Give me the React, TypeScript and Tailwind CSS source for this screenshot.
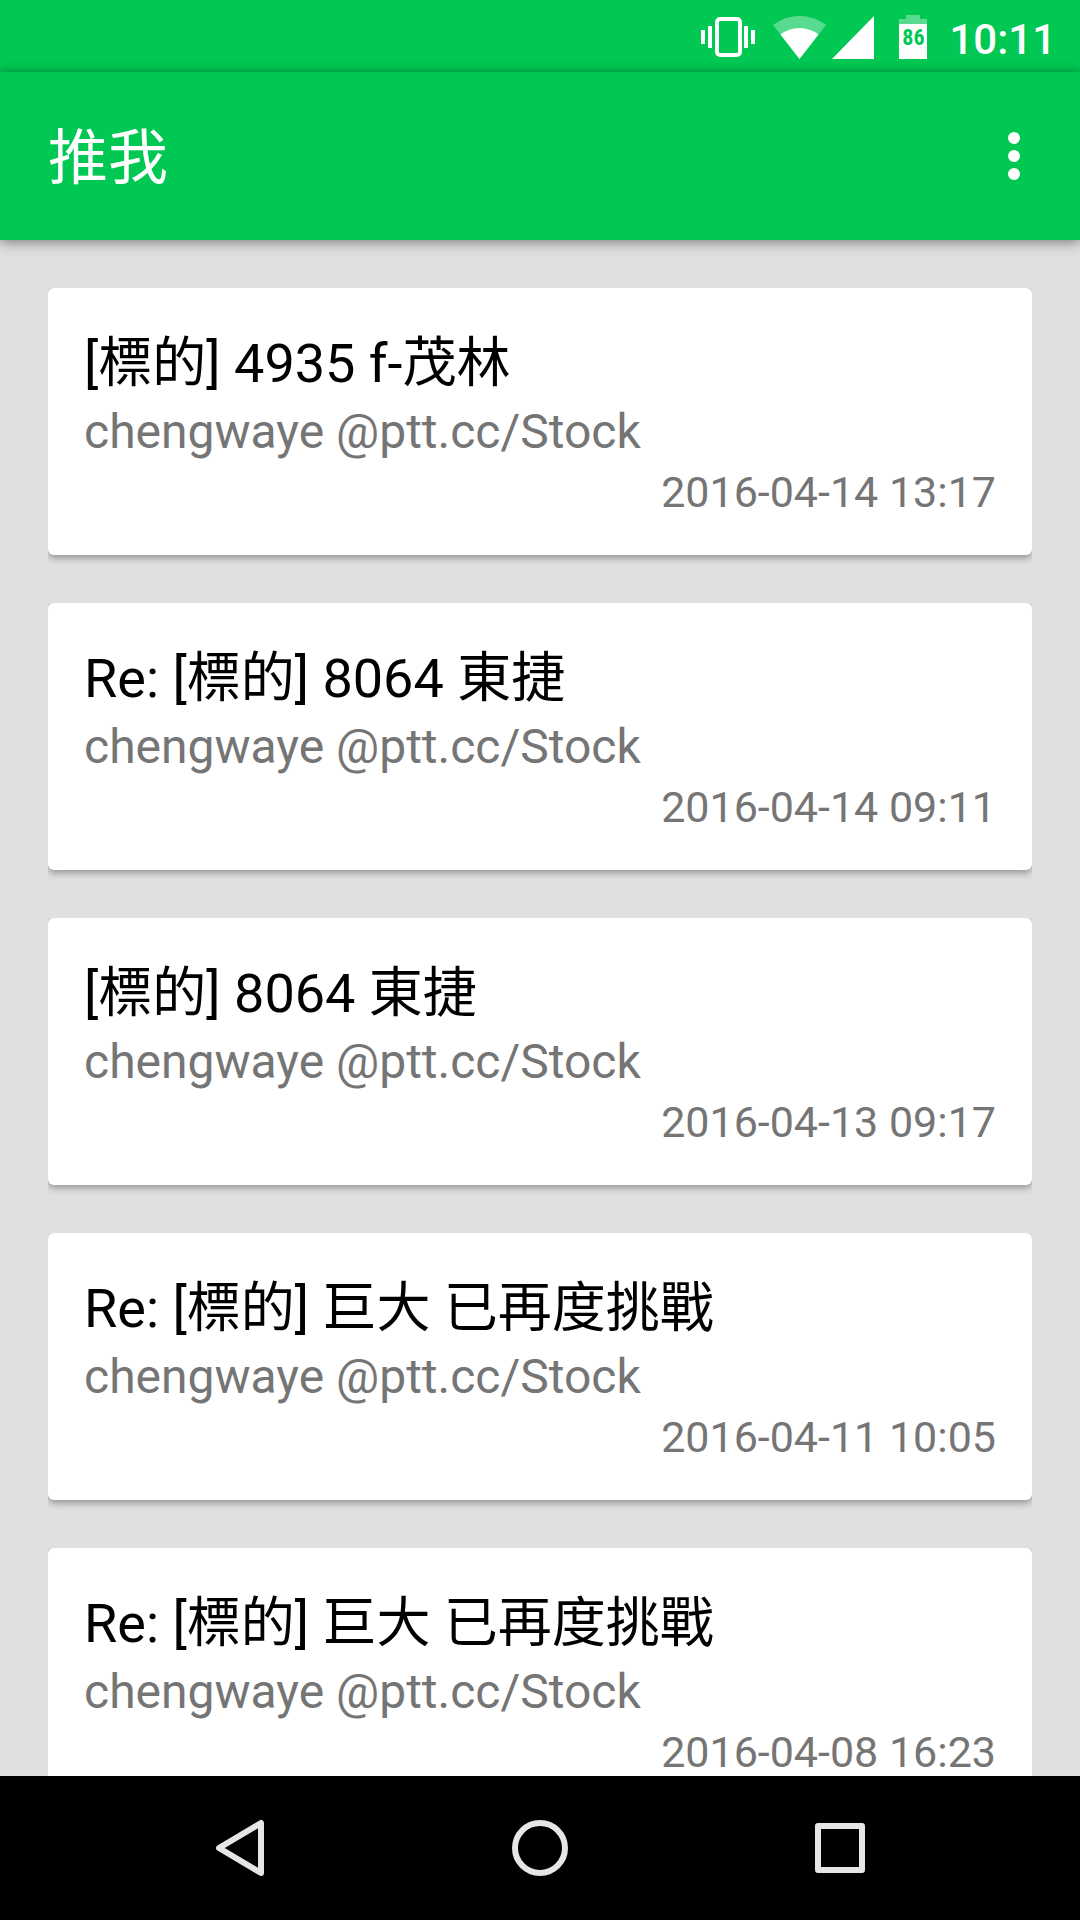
type Post = {
  title: string;
  author: string;
  date: string;
};

const posts: Post[] = [
  { title: "[標的] 4935 f-茂林", author: "chengwaye @ptt.cc/Stock", date: "2016-04-14 13:17" },
  { title: "Re: [標的] 8064 東捷", author: "chengwaye @ptt.cc/Stock", date: "2016-04-14 09:11" },
  { title: "[標的] 8064 東捷", author: "chengwaye @ptt.cc/Stock", date: "2016-04-13 09:17" },
  { title: "Re: [標的] 巨大 已再度挑戰", author: "chengwaye @ptt.cc/Stock", date: "2016-04-11 10:05" },
  { title: "Re: [標的] 巨大 已再度挑戰", author: "chengwaye @ptt.cc/Stock", date: "2016-04-08 16:23" },
];

function StatusBar() {
  return (
    <div className="flex h-18 shrink-0 items-center justify-end bg-[#00c853] pt-0.5 pr-6 text-white">
      {/* Vibrate */}
      <svg width="54" height="44" viewBox="0 0 54 44" fill="currentColor" aria-hidden="true">
        <rect x="0" y="15" width="4" height="14" />
        <rect x="7" y="11" width="4" height="22" />
        <rect x="16" y="4" width="23" height="36" rx="3" fill="none" stroke="currentColor" strokeWidth="4" />
        <rect x="16" y="3" width="23" height="3" />
        <rect x="16" y="38" width="23" height="3" />
        <rect x="43" y="11" width="4" height="22" />
        <rect x="50" y="15" width="4" height="14" />
      </svg>

      {/* Wi-Fi */}
      <svg className="ml-4.5" width="53" height="44" viewBox="0 0 53 44" fill="currentColor" aria-hidden="true">
        <path d="M26.500 44 L0 10 Q12 1 26.500 1 Q41 1 53 10 Z" opacity="0.35" />
        <path d="M26.500 44 L7.500 19.500 Q16 13 26.500 13 Q37 13 45.500 19.500 Z" />
      </svg>

      {/* Signal */}
      <svg className="ml-1.5" width="42" height="44" viewBox="0 0 42 44" fill="currentColor" aria-hidden="true">
        <path d="M42 1 V44 H0 Z" />
      </svg>

      {/* Battery */}
      <div className="relative ml-6">
        <svg width="30" height="44" viewBox="0 0 30 44" fill="currentColor" aria-hidden="true">
          <path d="M8 0 H22 V4 H29 V10 H1 V4 H8 Z" opacity="0.35" />
          <rect x="1" y="9" width="28" height="35" />
        </svg>
        <span className="absolute inset-x-0 top-2.5 text-center font-['Roboto_Condensed',Roboto,sans-serif] text-[22px] leading-[26px] font-bold text-[#00c853]">
          86
        </span>
      </div>

      <span className="ml-[21px] pt-1.5 text-[42px] leading-[50px] font-medium">10:11</span>
    </div>
  );
}

function AppBar() {
  return (
    <header className="relative z-10 flex h-42 shrink-0 items-center justify-between bg-[#00c853] pr-6 pl-12 text-white shadow-[0_0_10px_rgba(0,0,0,0.25),0_4px_12px_rgba(0,0,0,0.25)]">
      <h1 className="pt-1.5 text-[60px] leading-18">推我</h1>
      <button type="button" aria-label="More options" className="flex h-30 w-21 items-center justify-center">
        <svg width="12" height="48" viewBox="0 0 12 48" fill="currentColor" aria-hidden="true">
          <circle cx="6" cy="6" r="6" />
          <circle cx="6" cy="24" r="6" />
          <circle cx="6" cy="42" r="6" />
        </svg>
      </button>
    </header>
  );
}

function PostCard({ post }: { post: Post }) {
  return (
    <li className="rounded-md bg-white p-9 shadow-[0_3px_7px_rgba(0,0,0,0.35)] [clip-path:inset(0_0_-12px_0)]">
      <h2 className="text-[54px] leading-20 text-black">{post.title}</h2>
      <p className="text-[48px] leading-14 text-[#757575]">{post.author}</p>
      <p className="mt-1.5 text-right text-[43px] leading-[53px] text-[#757575]">{post.date}</p>
    </li>
  );
}

function NavBar() {
  return (
    <nav className="flex h-36 shrink-0 items-center justify-center gap-39 bg-black text-[#e6e6e6]">
      <button type="button" aria-label="Back" className="flex h-full w-36 items-center justify-center">
        <svg width="60" height="60" viewBox="0 0 60 60" fill="none" stroke="currentColor" strokeWidth="6" strokeLinejoin="round" aria-hidden="true">
          <path d="M51 5 V55 L9 30 Z" />
        </svg>
      </button>
      <button type="button" aria-label="Home" className="flex h-full w-36 items-center justify-center">
        <svg width="60" height="60" viewBox="0 0 60 60" fill="none" stroke="currentColor" strokeWidth="6" aria-hidden="true">
          <circle cx="30" cy="30" r="25" />
        </svg>
      </button>
      <button type="button" aria-label="Recent apps" className="flex h-full w-36 items-center justify-center">
        <svg width="60" height="60" viewBox="0 0 60 60" fill="none" stroke="currentColor" strokeWidth="6" strokeLinejoin="round" aria-hidden="true">
          <rect x="8" y="8" width="44" height="44" />
        </svg>
      </button>
    </nav>
  );
}

export default function App() {
  return (
    <div
      lang="zh-Hant"
      className="flex h-screen flex-col bg-[#e0e0e0] font-[Roboto,'Noto_Sans_CJK_TC',sans-serif]"
    >
      <StatusBar />
      <AppBar />
      <main className="min-h-0 flex-1 overflow-y-auto [scrollbar-width:none]">
        <ul className="flex flex-col gap-12 p-12">
          {posts.map((post) => (
            <PostCard key={post.date} post={post} />
          ))}
        </ul>
      </main>
      <NavBar />
    </div>
  );
}
